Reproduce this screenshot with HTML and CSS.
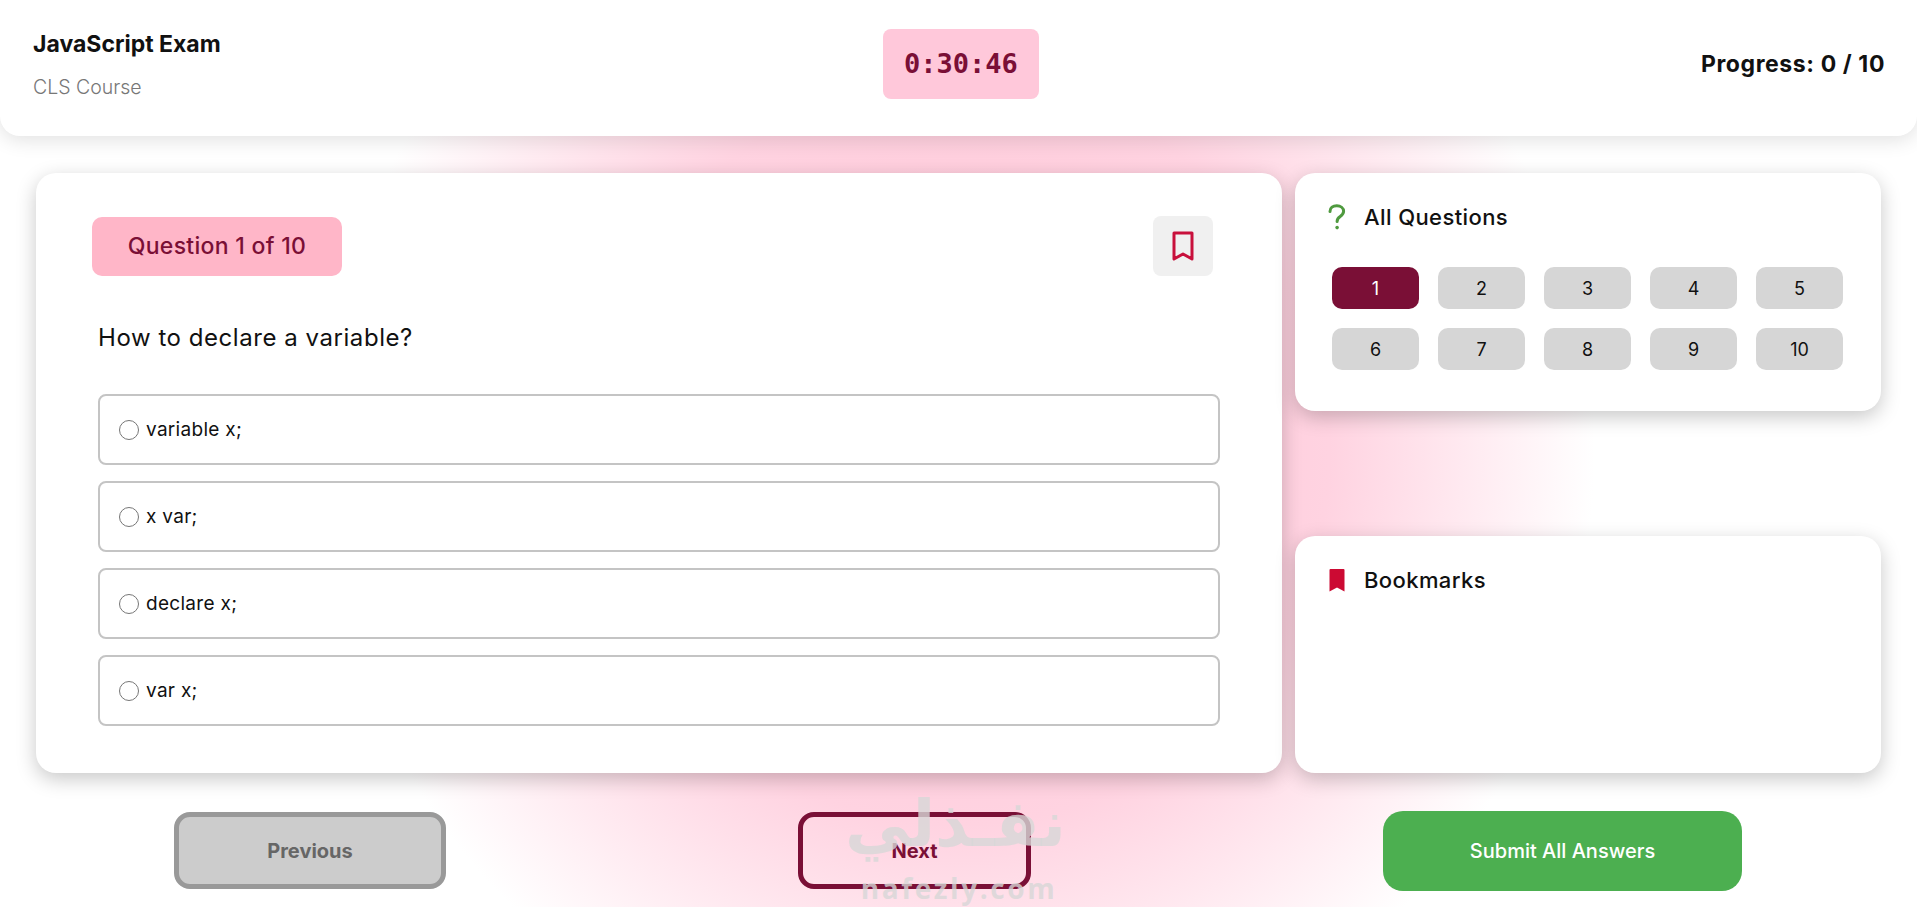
FILE: index.html
```html
<!DOCTYPE html>
<html lang="en">
<head>
    <meta charset="UTF-8">
    <meta name="viewport" content="width=device-width, initial-scale=1.0">
    <title>JavaScript Exam</title>
    <link rel="stylesheet" href="styles.css">
</head>
<body>
    <header class="exam-header">
        <div class="exam-info">
            <h1>JavaScript Exam</h1>
            <p>CLS Course</p>
        </div>
        <div class="timer">0:30:46</div>
        <div class="progress">Progress: 0 / 10</div>
    </header>

    <main class="exam-body">
        <section class="card question-card">
            <div class="question-top">
                <span class="question-badge">Question 1 of 10</span>
                <button type="button" class="bookmark-btn" aria-label="Bookmark">
                    <svg width="22" height="30" viewBox="0 0 22 30" fill="none" stroke="#c8103c" stroke-width="3" stroke-linejoin="round">
                        <path d="M2 2h18v26l-9-5-9 5z"/>
                    </svg>
                </button>
            </div>
            <h2 class="question-text">How to declare a variable?</h2>
            <div class="options">
                <label class="option"><input type="radio" name="answer"> variable x;</label>
                <label class="option"><input type="radio" name="answer"> x var;</label>
                <label class="option"><input type="radio" name="answer"> declare x;</label>
                <label class="option"><input type="radio" name="answer"> var x;</label>
            </div>
        </section>

        <aside class="side">
            <section class="card side-card">
                <h3 class="side-title">
                    <svg class="side-icon" width="18" height="26" viewBox="0 0 18 26" fill="none" stroke="#4f9a3f" stroke-width="3" stroke-linecap="round">
                        <path d="M2 7.500C2 3.800 5 1.800 8.800 1.800c3.900 0 6.800 2.300 6.800 5.500 0 2.600-1.500 3.800-3.400 5.100-1.900 1.300-3.100 2.400-3.100 5"/>
                        <circle cx="9.100" cy="23.600" r="1.800" fill="#4f9a3f" stroke="none"/>
                    </svg>
                    All Questions
                </h3>
                <div class="question-grid">
                    <button type="button" class="num active">1</button>
                    <button type="button" class="num">2</button>
                    <button type="button" class="num">3</button>
                    <button type="button" class="num">4</button>
                    <button type="button" class="num">5</button>
                    <button type="button" class="num">6</button>
                    <button type="button" class="num">7</button>
                    <button type="button" class="num">8</button>
                    <button type="button" class="num">9</button>
                    <button type="button" class="num">10</button>
                </div>
            </section>
            <section class="card side-card bookmarks-card">
                <h3 class="side-title">
                    <svg class="side-icon" width="18" height="24" viewBox="0 0 18 24">
                        <path d="M2.500 1h13a1 1 0 0 1 1 1v21.500l-7.500-4-7.500 4V2a1 1 0 0 1 1-1z" fill="#cc0a33"/>
                    </svg>
                    Bookmarks
                </h3>
            </section>
        </aside>
    </main>

    <footer class="exam-actions">
        <button type="button" class="btn btn-prev">Previous</button>
        <button type="button" class="btn btn-next">Next</button>
        <button type="button" class="btn btn-submit">Submit All Answers</button>
    </footer>

    <div class="watermark">
        <span class="watermark-ar" dir="rtl">نفـذلي</span>
        <span class="watermark-en">nafezly.com</span>
    </div>
</body>
</html>
```

FILE: styles.css
```css
* {
    box-sizing: border-box;
}

html, body {
    height: 100%;
}

body {
    position: relative;
    margin: 0;
    overflow: hidden;
    font-family: Inter, "Noto Sans", sans-serif;
    color: #111;
    background: radial-gradient(circle at 50% 50%, #ffc0d2 0%, #ffd3e1 35%, #ffffff 60%);
}

h1, h2, h3, p {
    margin: 0;
}

button {
    font-family: inherit;
    cursor: pointer;
}

.exam-header {
    display: flex;
    justify-content: space-between;
    align-items: center;
    height: 136px;
    padding: 0 32px 8px 33px;
    background: #fff;
    border-radius: 0 0 20px 20px;
    box-shadow: 0 4px 20px rgba(0, 0, 0, 0.12);
}

.exam-info {
    padding-top: 1px;
}

.exam-info h1 {
    font-size: 23px;
    font-weight: 700;
    margin-bottom: 17px;
}

.exam-info p {
    font-size: 19.500px;
    font-weight: 300;
    color: #777;
}

.timer {
    width: 156px;
    height: 70px;
    line-height: 70px;
    text-align: center;
    font-family: "DejaVu Sans Mono", "Liberation Mono", monospace;
    font-size: 27px;
    font-weight: 700;
    color: #7a0f36;
    background: #ffc8da;
    border-radius: 8px;
}

.progress {
    font-size: 23px;
    font-weight: 700;
    letter-spacing: 0.6px;
}

.exam-body {
    display: grid;
    grid-template-columns: 1246px 586px;
    gap: 13px;
    height: 600px;
    margin: 37px 36px 0;
}

.card {
    background: #fff;
    border-radius: 20px;
    box-shadow: 0 6px 20px rgba(0, 0, 0, 0.22);
}

.question-card {
    padding: 43px 62px 0 56px;
}

.question-top {
    display: flex;
    justify-content: space-between;
    align-items: flex-start;
    margin-right: 7px;
}

.question-badge {
    width: 250px;
    height: 59px;
    margin-top: 1px;
    line-height: 59px;
    text-align: center;
    font-size: 23px;
    font-weight: 500;
    letter-spacing: 0.3px;
    color: #7a0f36;
    background: #ffb6c8;
    border-radius: 10px;
}

.bookmark-btn {
    display: flex;
    align-items: center;
    justify-content: center;
    width: 60px;
    height: 60px;
    padding: 0;
    border: none;
    background: #f0f0f0;
    border-radius: 8px;
}

.question-text {
    margin: 47px 0 41px 6px;
    font-size: 24px;
    font-weight: 400;
    line-height: 30px;
    letter-spacing: 0.55px;
}

.options {
    display: flex;
    flex-direction: column;
    gap: 16px;
    margin-left: 6px;
}

.option {
    display: flex;
    align-items: center;
    gap: 7px;
    height: 71px;
    padding: 0 19px;
    font-size: 19px;
    letter-spacing: 0.3px;
    border: 2px solid #c4c4c4;
    border-radius: 8px;
}

.option input {
    width: 20px;
    height: 20px;
    margin: 0;
}

.side {
    display: flex;
    flex-direction: column;
    justify-content: space-between;
}

.side-card {
    height: 238px;
    padding: 29px 38px 0 37px;
}

.bookmarks-card {
    height: 237px;
}

.side-title {
    display: flex;
    align-items: center;
    gap: 18px;
    height: 30px;
    font-size: 22px;
    font-weight: 500;
    letter-spacing: 0.4px;
}

.side-icon {
    flex-shrink: 0;
    margin-left: -4px;
}

.question-grid {
    display: grid;
    grid-template-columns: repeat(5, 87px);
    gap: 19px;
    margin-top: 35px;
}

.num {
    height: 42px;
    padding: 0;
    border: none;
    font-size: 18px;
    color: #111;
    background: #d6d6d6;
    border-radius: 10px;
}

.num.active {
    color: #fff;
    background: #7a0f36;
}

.exam-actions {
    display: flex;
    justify-content: space-between;
    align-items: center;
    height: 134px;
    padding: 21px 175px 0 174px;
}

.btn {
    height: 77px;
    font-size: 20px;
    font-weight: 700;
    border-radius: 16px;
}

.btn-prev {
    width: 272px;
    color: #666;
    background: #ccc;
    border: 5px solid #999;
}

.btn-next {
    width: 233px;
    color: #7a0f36;
    background: transparent;
    border: 5px solid #7a0f36;
}

.btn-submit {
    width: 359px;
    height: 80px;
    font-weight: 500;
    color: #fff;
    background: #4caf50;
    border: none;
    border-radius: 20px;
}

/* watermark sits over the footer buttons */
.watermark {
    position: absolute;
    left: 852px;
    top: 786px;
    width: 214px;
    text-align: center;
    color: rgba(215, 215, 215, 0.8);
    font-weight: 700;
    pointer-events: none;
}

.watermark-ar {
    display: block;
    font-family: "DejaVu Sans", sans-serif;
    font-size: 65px;
    line-height: 76px;
    white-space: nowrap;
}

.watermark-en {
    display: block;
    margin-top: 10px;
    font-family: "Open Sans", sans-serif;
    font-size: 28px;
    line-height: 32px;
    letter-spacing: 2.6px;
}
```
